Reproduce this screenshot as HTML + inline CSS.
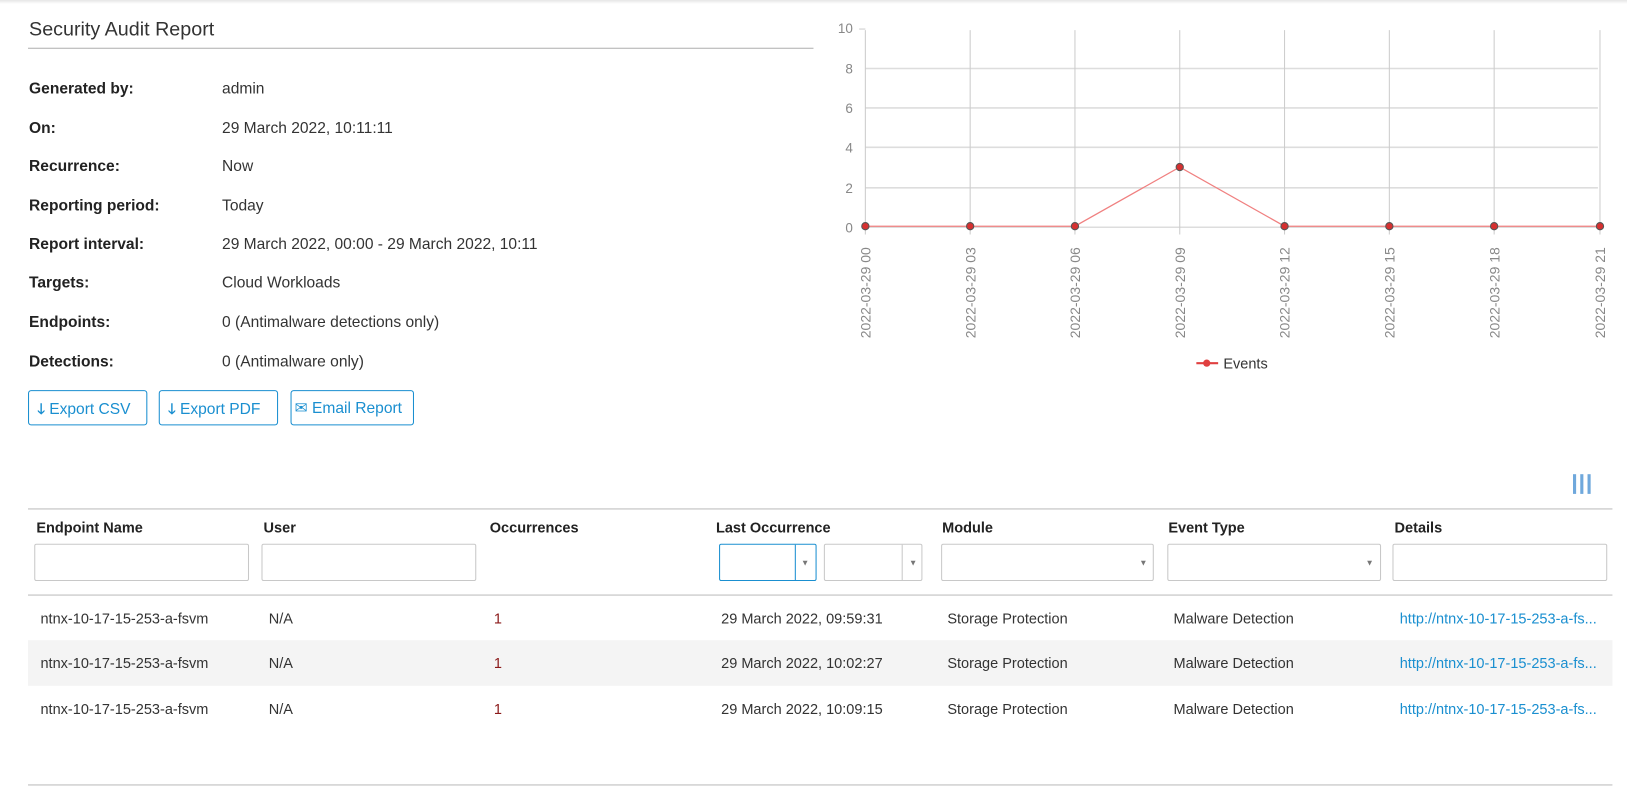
<!DOCTYPE html>
<html><head><meta charset="utf-8"><style>
html,body{margin:0;width:1627px;height:786px;overflow:hidden;background:#fff}
#w{position:absolute;left:0;top:0;width:1568px;height:758px;transform:scale(1.0376);transform-origin:0 0;font-family:"Liberation Sans",sans-serif;color:#333}
.a{position:absolute;white-space:nowrap}
.topsh{position:absolute;left:0;top:0;width:1627px;height:4px;background:linear-gradient(#e6e6e6,#fff)}
.lbl{font-weight:bold;font-size:15px;color:#222}
.val{font-size:15px;color:#333}
.btn{position:absolute;top:376px;height:34px;border:1px solid #1a8fd0;border-radius:3px;color:#1a8fd0;font-size:15px;line-height:34px;box-sizing:border-box;padding-left:8px}
.th{font-weight:bold;font-size:14px;color:#222}
.inp{position:absolute;top:524px;height:36px;border:1px solid #c8c8c8;border-radius:2px;box-sizing:border-box}
.td{font-size:14px;color:#333}
.lnk{color:#1a8fd0}
.caret{position:absolute;font-size:8px;color:#777;top:13px}
</style></head><body>
<div class="topsh"></div>
<div id="w">
<div class="a" style="left:28px;top:18px;font-size:19px;color:#333">Security Audit Report</div>
<div class="a" style="left:27px;top:46px;width:757px;height:1px;background:#b0b0b0"></div>

<div class="a lbl" style="left:28px;top:77px">Generated by:</div><div class="a val" style="left:214px;top:77px">admin</div>
<div class="a lbl" style="left:28px;top:115px">On:</div><div class="a val" style="left:214px;top:115px">29 March 2022, 10:11:11</div>
<div class="a lbl" style="left:28px;top:152px">Recurrence:</div><div class="a val" style="left:214px;top:152px">Now</div>
<div class="a lbl" style="left:28px;top:190px">Reporting period:</div><div class="a val" style="left:214px;top:190px">Today</div>
<div class="a lbl" style="left:28px;top:227px">Report interval:</div><div class="a val" style="left:214px;top:227px">29 March 2022, 00:00 - 29 March 2022, 10:11</div>
<div class="a lbl" style="left:28px;top:264px">Targets:</div><div class="a val" style="left:214px;top:264px">Cloud Workloads</div>
<div class="a lbl" style="left:28px;top:302px">Endpoints:</div><div class="a val" style="left:214px;top:302px">0 (Antimalware detections only)</div>
<div class="a lbl" style="left:28px;top:340px">Detections:</div><div class="a val" style="left:214px;top:340px">0 (Antimalware only)</div>

<div class="btn" style="left:27px;width:115px"><b style="font-size:14px">🡓</b> Export CSV</div>
<div class="btn" style="left:153px;width:115px"><b style="font-size:14px">🡓</b> Export PDF</div>
<div class="btn" style="left:280px;width:119px;padding-left:3px">✉ Email Report</div>

<svg class="a" style="left:0;top:0" width="1627" height="370" font-family="Liberation Sans" font-size="13" fill="#888">
<g stroke="#ddd" stroke-width="1.5">
<line x1="834" y1="66" x2="1540" y2="66"/><line x1="834" y1="104" x2="1540" y2="104"/><line x1="834" y1="142" x2="1540" y2="142"/><line x1="834" y1="181" x2="1540" y2="181"/><line x1="834" y1="219" x2="1540" y2="219"/>
</g>
<g stroke="#ccc" stroke-width="1">
<line x1="834" y1="29" x2="834" y2="226"/><line x1="935" y1="29" x2="935" y2="226"/><line x1="1036" y1="29" x2="1036" y2="226"/><line x1="1137" y1="29" x2="1137" y2="226"/><line x1="1238" y1="29" x2="1238" y2="226"/><line x1="1339" y1="29" x2="1339" y2="226"/><line x1="1440" y1="29" x2="1440" y2="226"/><line x1="1542" y1="29" x2="1542" y2="226"/>
<line x1="828" y1="28" x2="834" y2="28"/>
</g>
<text x="822" y="32" text-anchor="end">10</text>
<text x="822" y="71" text-anchor="end">8</text>
<text x="822" y="109" text-anchor="end">6</text>
<text x="822" y="147" text-anchor="end">4</text>
<text x="822" y="186" text-anchor="end">2</text>
<text x="822" y="224" text-anchor="end">0</text>
<polyline points="834,218 935,218 1036,218 1137,161 1238,218 1339,218 1440,218 1542,218" fill="none" stroke="#f08080" stroke-width="1.2"/>
<g fill="#d63030" stroke="#555" stroke-width="1">
<circle cx="834" cy="218" r="3.5"/><circle cx="935" cy="218" r="3.5"/><circle cx="1036" cy="218" r="3.5"/><circle cx="1137" cy="161" r="3.5"/><circle cx="1238" cy="218" r="3.5"/><circle cx="1339" cy="218" r="3.5"/><circle cx="1440" cy="218" r="3.5"/><circle cx="1542" cy="218" r="3.5"/>
</g>
<g font-size="13.5">
<text transform="translate(839,326) rotate(-90)">2022-03-29 00</text>
<text transform="translate(940,326) rotate(-90)">2022-03-29 03</text>
<text transform="translate(1041,326) rotate(-90)">2022-03-29 06</text>
<text transform="translate(1142,326) rotate(-90)">2022-03-29 09</text>
<text transform="translate(1243,326) rotate(-90)">2022-03-29 12</text>
<text transform="translate(1344,326) rotate(-90)">2022-03-29 15</text>
<text transform="translate(1445,326) rotate(-90)">2022-03-29 18</text>
<text transform="translate(1547,326) rotate(-90)">2022-03-29 21</text>
</g>
<line x1="1153" y1="350" x2="1174" y2="350" stroke="#e04040" stroke-width="2"/>
<circle cx="1163" cy="350" r="3.5" fill="#e04040"/>
<text x="1179" y="355" fill="#333" font-size="14">Events</text>
</svg>

<div class="a" style="left:1516px;top:457px;width:3px;height:19px;background:#6fa8dc;box-shadow:7px 0 0 #6fa8dc,14px 0 0 #6fa8dc"></div>

<div class="a" style="left:27px;top:490px;width:1527px;height:1px;background:#bbb"></div>
<div class="a th" style="left:35px;top:500px">Endpoint Name</div>
<div class="a th" style="left:254px;top:500px">User</div>
<div class="a th" style="left:472px;top:500px">Occurrences</div>
<div class="a th" style="left:690px;top:500px">Last Occurrence</div>
<div class="a th" style="left:908px;top:500px">Module</div>
<div class="a th" style="left:1126px;top:500px">Event Type</div>
<div class="a th" style="left:1344px;top:500px">Details</div>

<div class="inp" style="left:33px;width:207px"></div>
<div class="inp" style="left:252px;width:207px"></div>
<div class="inp" style="left:693px;width:94px;border-color:#1a8fd0"><div class="a" style="left:72px;top:0;width:1px;height:34px;background:#1a8fd0"></div><span class="caret" style="left:78px">▼</span></div>
<div class="inp" style="left:794px;width:95px"><div class="a" style="left:74px;top:0;width:1px;height:34px;background:#c8c8c8"></div><span class="caret" style="left:81px">▼</span></div>
<div class="inp" style="left:907px;width:205px"><span class="caret" style="left:190px">▼</span></div>
<div class="inp" style="left:1125px;width:206px"><span class="caret" style="left:190px">▼</span></div>
<div class="inp" style="left:1342px;width:207px"></div>

<div class="a" style="left:27px;top:573px;width:1527px;height:1px;background:#bbb"></div>
<div class="a" style="left:27px;top:617px;width:1527px;height:44px;background:#f4f4f4"></div>

<div class="a td" style="left:39px;top:588px">ntnx-10-17-15-253-a-fsvm</div><div class="a td" style="left:259px;top:588px">N/A</div><div class="a td" style="left:476px;top:588px;color:#8b1a1a">1</div><div class="a td" style="left:695px;top:588px">29 March 2022, 09:59:31</div><div class="a td" style="left:913px;top:588px">Storage Protection</div><div class="a td" style="left:1131px;top:588px">Malware Detection</div><div class="a td lnk" style="left:1349px;top:588px">http://ntnx-10-17-15-253-a-fs...</div>
<div class="a td" style="left:39px;top:631px">ntnx-10-17-15-253-a-fsvm</div><div class="a td" style="left:259px;top:631px">N/A</div><div class="a td" style="left:476px;top:631px;color:#8b1a1a">1</div><div class="a td" style="left:695px;top:631px">29 March 2022, 10:02:27</div><div class="a td" style="left:913px;top:631px">Storage Protection</div><div class="a td" style="left:1131px;top:631px">Malware Detection</div><div class="a td lnk" style="left:1349px;top:631px">http://ntnx-10-17-15-253-a-fs...</div>
<div class="a td" style="left:39px;top:675px">ntnx-10-17-15-253-a-fsvm</div><div class="a td" style="left:259px;top:675px">N/A</div><div class="a td" style="left:476px;top:675px;color:#8b1a1a">1</div><div class="a td" style="left:695px;top:675px">29 March 2022, 10:09:15</div><div class="a td" style="left:913px;top:675px">Storage Protection</div><div class="a td" style="left:1131px;top:675px">Malware Detection</div><div class="a td lnk" style="left:1349px;top:675px">http://ntnx-10-17-15-253-a-fs...</div>

<div class="a" style="left:27px;top:756px;width:1527px;height:1px;background:#bbb"></div>
</div>
</body></html>
